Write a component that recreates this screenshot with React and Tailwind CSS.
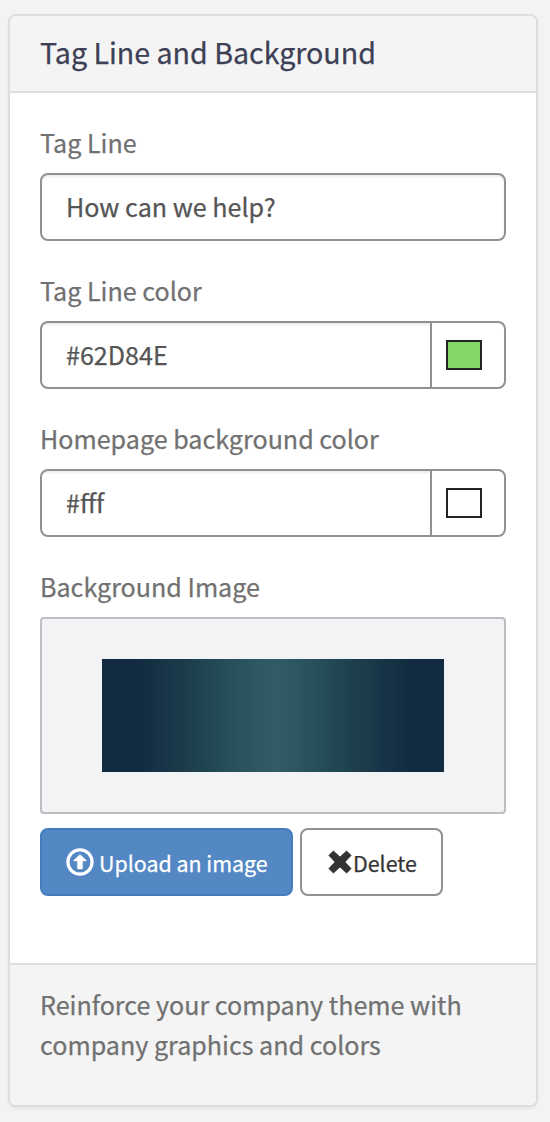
const inputShadow = 'shadow-[inset_0_2px_2px_rgba(0,0,0,0.075)]';

function UploadIcon() {
  return (
    <svg className="block h-7 w-7 shrink-0" viewBox="0 0 28 28" aria-hidden="true">
      <circle cx="14" cy="14" r="12.1" fill="none" stroke="#fff" strokeWidth="3.2" />
      <path
        d="M14 6.6 20.3 12.3V12.9H16.6V20.6Q16.6 21 16.2 21H11.8Q11.4 21 11.4 20.6V12.9H7.7V12.3Z"
        fill="#fff"
        stroke="#fff"
        strokeWidth="0.4"
        strokeLinejoin="round"
      />
    </svg>
  );
}

function RemoveIcon() {
  return (
    <svg className="block h-6 w-6 shrink-0" viewBox="0 0 24 24" aria-hidden="true">
      <path
        d="M5.4 0.9 12 7.1 18.6 0.9 23.1 5.4 16.9 12 23.1 18.6 18.6 23.1 12 16.9 5.4 23.1 0.9 18.6 7.1 12 0.9 5.4Z"
        fill="#333"
        stroke="#333"
        strokeWidth="0.8"
        strokeLinejoin="round"
      />
    </svg>
  );
}

function Label({ children }) {
  return (
    <label className="mb-[11px] block h-[39px] whitespace-nowrap text-[25.1px] leading-[38px] text-[#717171]">
      {children}
    </label>
  );
}

function ColorField({ label, value, swatch }) {
  return (
    <div>
      <Label>{label}</Label>
      <div className="flex h-[68px] overflow-hidden rounded-lg border-2 border-[#919191] bg-white">
        <div className={`flex flex-1 items-center pb-0.5 pl-6 text-[25.1px] leading-10 text-[#555] ${inputShadow}`}>
          <span>{value}</span>
        </div>
        <div className="flex w-[74px] items-center border-l-2 border-[#919191] pl-3.5">
          <span className={`block h-[30px] w-9 border-2 border-[#222] ${swatch}`} />
        </div>
      </div>
    </div>
  );
}

export default function App() {
  return (
    <main className="h-[1122px] w-[550px] bg-[#f1f3f5] pl-2 pt-3.5 font-['Noto_Sans_CJK_SC','Source_Sans_Pro',sans-serif] [-webkit-text-stroke:0.25px]">
      <section className="flex h-[1093px] w-[530px] flex-col overflow-hidden rounded-lg border-2 border-[#dcdddd] bg-white shadow-[0_2px_3px_rgba(0,0,0,0.05)]">
        <header className="flex h-[77px] shrink-0 items-center border-b-2 border-[#dcdddd] bg-[#f4f4f4] px-[30px] pb-1">
          <h2 className="whitespace-nowrap text-[28.6px] leading-10 text-[#3d4055]">Tag Line and Background</h2>
        </header>

        <div className="flex flex-1 flex-col gap-[30px] px-[30px] pt-[30px]">
          <div>
            <Label>Tag Line</Label>
            <div
              className={`flex h-[68px] items-center rounded-lg border-2 border-[#919191] bg-white pb-0.5 pl-6 text-[25.1px] leading-10 text-[#555] ${inputShadow}`}
            >
              <span>How can we help?</span>
            </div>
          </div>
          <ColorField label="Tag Line color" value="#62D84E" swatch="bg-[#84d665]" />
          <ColorField label="Homepage background color" value="#fff" swatch="bg-white" />
          <div>
            <Label>Background Image</Label>
            <div className="flex h-[197px] items-center justify-center rounded border-2 border-[#bcbec2] bg-[#f1f3f5]">
              <div className="h-[113px] w-[342px] bg-[linear-gradient(90deg,#122b40_0%,#122b40_11%,#1e404e_27%,#27505c_38%,#315c67_50%,#27505c_62%,#1e404e_73%,#122b40_90%,#122b40_100%)]" />
            </div>
            <div className="mt-3.5 flex gap-[7px]">
              <button className="flex h-[68px] w-[253px] items-center rounded-lg border-2 border-[#457cbe] bg-[#5488c5] pl-6 text-[21.4px] text-white">
                <UploadIcon />
                <span className="ml-[5px] whitespace-nowrap pt-0.5">Upload an image</span>
              </button>
              <button className="flex h-[68px] w-[143px] items-center rounded-lg border-2 border-[#919191] bg-white pl-[25.5px] text-[21.4px] text-[#333]">
                <RemoveIcon />
                <span className="ml-[1.5px] whitespace-nowrap pt-0.5">Delete</span>
              </button>
            </div>
          </div>
        </div>

        <footer className="h-[142px] shrink-0 border-t-2 border-[#dcdddd] bg-[#f4f4f4] px-[30px] pt-[19px]">
          <p className="text-[25.1px] leading-10 text-[#717171]">
            Reinforce your company theme with
            <br />
            company graphics and colors
          </p>
        </footer>
      </section>
    </main>
  );
}
